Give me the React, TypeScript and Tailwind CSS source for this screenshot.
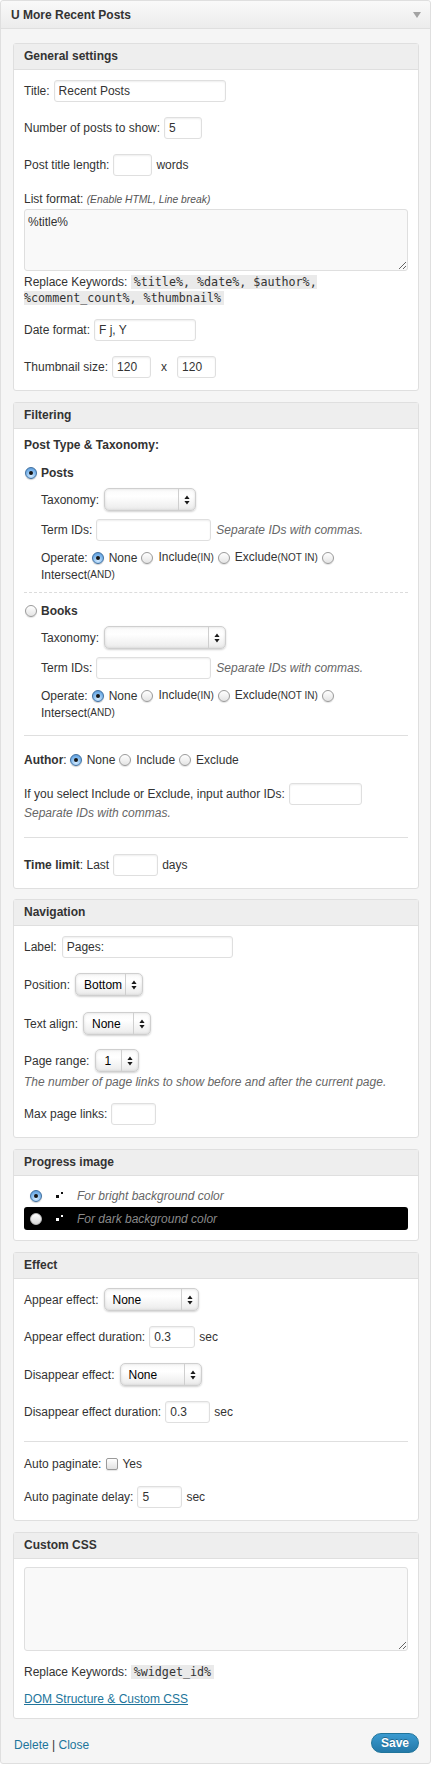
import React from "react";

const field =
  "h-[22px] shrink-0 rounded-[3px] border border-[#dfdfdf] bg-white px-[4px] text-[12px] text-[#333] outline-none shadow-[inset_0_1px_2px_rgba(0,0,0,0.07)]";

function Radio({ checked, className = "" }: { checked?: boolean; className?: string }) {
  if (checked) {
    return (
      <span
        className={
          "flex h-[12px] w-[12px] shrink-0 items-center justify-center rounded-full border border-[#3f6f9f] bg-[radial-gradient(circle_at_50%_75%,#d6ecff,#79b3ea_60%,#4f8fd0)] shadow-[0_1px_1px_rgba(0,0,0,0.2)] " +
          className
        }
      >
        <span className="h-[4px] w-[4px] rounded-full bg-[#161616]" />
      </span>
    );
  }
  return (
    <span
      className={
        "block h-[12px] w-[12px] shrink-0 rounded-full border border-[#9a9a9a] bg-[linear-gradient(#ffffff,#e4e4e4)] shadow-[0_1px_1px_rgba(0,0,0,0.12)] " +
        className
      }
    />
  );
}

function Select({ value, className }: { value: string; className: string }) {
  return (
    <span
      className={
        "flex h-[23px] shrink-0 items-stretch overflow-hidden rounded-[5px] border border-[#cfcfcf] bg-[linear-gradient(#fafafa,#ffffff_35%,#ebebeb)] shadow-[inset_0_0_3px_rgba(0,0,0,0.12),0_1px_2px_rgba(0,0,0,0.18)] " +
        className
      }
    >
      <span className="flex flex-1 items-center pl-[8px] text-[12px] text-black">{value}</span>
      <span className="flex w-[17px] items-center justify-center border-l border-[#cfcfcf]">
        <svg width="6" height="10" viewBox="0 0 6 10">
          <path d="M3 0.5L5.6 4H0.4z M0.4 6h5.2L3 9.5z" fill="#1a1a1a" />
        </svg>
      </span>
    </span>
  );
}

function Dots({ color }: { color: string }) {
  return (
    <svg width="8" height="8" viewBox="0 0 8 8" className="shrink-0">
      <rect x="5" y="0" width="2" height="2" fill={color} />
      <rect x="0" y="3" width="3" height="3" fill={color} />
    </svg>
  );
}

function Code({ children, className = "px-[3px]" }: { children: React.ReactNode; className?: string }) {
  return (
    <code
      className={
        "bg-[#eaeaea] font-['DejaVu_Sans_Mono',monospace] text-[11.7px] leading-[16px] text-[#333] " + className
      }
    >
      {children}
    </code>
  );
}

function Section({
  title,
  className,
  bodyClass,
  children,
}: {
  title: string;
  className: string;
  bodyClass: string;
  children: React.ReactNode;
}) {
  return (
    <div className={"rounded-[3px] border border-[#dfdfdf] bg-white " + className}>
      <div className="h-[26px] border-b border-[#dfdfdf] bg-[#eeeeee] px-[10px] text-[12px] font-bold leading-[25px] text-[#333]">
        {title}
      </div>
      <div className={"flex flex-col px-[10px] " + bodyClass}>{children}</div>
    </div>
  );
}

function Row({ className, children }: { className: string; children: React.ReactNode }) {
  return <div className={"flex items-center gap-[4px] " + className}>{children}</div>;
}

function Operate() {
  return (
    <>
      <div className="mt-[8px] flex h-[17px] items-center">
        <span>Operate:</span>
        <Radio checked className="ml-[4px]" />
        <span className="ml-[5px]">None</span>
        <Radio className="ml-[4px]" />
        <span className="ml-[5px]">
          Include<span className="text-[10px]">(IN)</span>
        </span>
        <Radio className="ml-[4px]" />
        <span className="ml-[5px]">
          Exclude<span className="text-[10px]">(NOT IN)</span>
        </span>
        <Radio className="ml-[4px]" />
      </div>
      <div className="flex h-[17px] items-center">
        Intersect<span className="text-[10px]">(AND)</span>
      </div>
    </>
  );
}

function Hint({ children }: { children: React.ReactNode }) {
  return <span className="ml-[1px] italic text-[#666]">{children}</span>;
}

export default function App() {
  return (
    <div className="min-h-[1766px] bg-white font-['Liberation_Sans',Arial,sans-serif] text-[12px] leading-[16px] text-[#333]">
      <div className="w-[431px] rounded-[3px] border border-[#dfdfdf] bg-[#f5f5f5]">
        {/* widget title bar */}
        <div className="flex h-[28px] items-center justify-between rounded-t-[3px] border-b border-[#dfdfdf] bg-[linear-gradient(#f9f9f9,#ececec)] pl-[10px] pr-[9px]">
          <span className="font-bold text-[#333]">U More Recent Posts</span>
          <svg width="8" height="6" viewBox="0 0 8 6">
            <path d="M0 0h8L4 6z" fill="#a3a3a3" />
          </svg>
        </div>

        <div className="flex flex-col pb-[10px] pl-[12px] pr-[11px] pt-[14px]">
          {/* General settings */}
          <Section title="General settings" className="" bodyClass="pb-[12px]">
            <Row className="mt-[10px] h-[22px]">
              <span>Title:</span>
              <input className={field + " w-[172px]"} defaultValue="Recent Posts" />
            </Row>
            <Row className="mt-[15px] h-[22px]">
              <span>Number of posts to show:</span>
              <input className={field + " w-[38px]"} defaultValue="5" />
            </Row>
            <Row className="mt-[15px] h-[22px]">
              <span>Post title length:</span>
              <input className={field + " w-[39px]"} defaultValue="" />
              <span>words</span>
            </Row>
            <div className="mt-[15px] h-[16px]">
              List format: <span className="text-[10.3px] italic text-[#555]">(Enable HTML, Line break)</span>
            </div>
            <textarea
              className="mt-[2px] h-[62px] w-full rounded-[3px] border border-[#dfdfdf] bg-[#f9f9f9] px-[3px] pt-[4px] text-[12px] leading-[16px] text-[#333] outline-none"
              defaultValue="%title%"
            />
            <div className="mt-[3px] flex flex-col">
              <div className="h-[16px]">
                Replace Keywords: <Code className="pl-[3px]">%title%, %date%, $author%,</Code>
              </div>
              <div className="h-[16px]">
                <Code className="pr-[3px]">%comment_count%, %thumbnail%</Code>
              </div>
            </div>
            <Row className="mt-[13px] h-[22px]">
              <span>Date format:</span>
              <input className={field + " w-[102px]"} defaultValue="F j, Y" />
            </Row>
            <Row className="mt-[15px] h-[22px]">
              <span>Thumbnail size:</span>
              <input className={field + " w-[39px]"} defaultValue="120" />
              <span className="px-[6px]">x</span>
              <input className={field + " w-[39px]"} defaultValue="120" />
            </Row>
          </Section>

          {/* Filtering */}
          <Section title="Filtering" className="mt-[11px]" bodyClass="pb-[12px]">
            <div className="mt-[8px] h-[16px] font-bold">Post Type &amp; Taxonomy:</div>

            <div className="mt-[12px] flex h-[16px] items-center">
              <Radio checked className="ml-[1px]" />
              <span className="ml-[4px] font-bold">Posts</span>
            </div>
            <div className="flex flex-col pl-[17px]">
              <Row className="mt-[7px] h-[23px]">
                <span>Taxonomy:</span>
                <Select value="" className="ml-[1px] w-[92px]" />
              </Row>
              <Row className="mt-[8px] h-[22px]">
                <span>Term IDs:</span>
                <input className={field + " w-[115px]"} />
                <Hint>Separate IDs with commas.</Hint>
              </Row>
              <Operate />
            </div>

            <div className="mt-[9px] border-t border-dashed border-[#dcdcdc]" />

            <div className="mt-[10px] flex h-[16px] items-center">
              <Radio className="ml-[1px]" />
              <span className="ml-[4px] font-bold">Books</span>
            </div>
            <div className="flex flex-col pl-[17px]">
              <Row className="mt-[7px] h-[23px]">
                <span>Taxonomy:</span>
                <Select value="" className="ml-[1px] w-[122px]" />
              </Row>
              <Row className="mt-[8px] h-[22px]">
                <span>Term IDs:</span>
                <input className={field + " w-[115px]"} />
                <Hint>Separate IDs with commas.</Hint>
              </Row>
              <Operate />
            </div>

            <div className="mt-[14px] border-t border-[#dfdfdf]" />

            <div className="mt-[16px] flex h-[16px] items-center">
              <span>
                <b>Author</b>:
              </span>
              <Radio checked className="ml-[3px]" />
              <span className="ml-[5px]">None</span>
              <Radio className="ml-[4px]" />
              <span className="ml-[5px]">Include</span>
              <Radio className="ml-[4px]" />
              <span className="ml-[5px]">Exclude</span>
            </div>
            <Row className="mt-[15px] h-[22px]">
              <span>If you select Include or Exclude, input author IDs:</span>
              <input className={field + " w-[73px]"} />
            </Row>
            <div className="h-[16px] italic text-[#666]">Separate IDs with commas.</div>

            <div className="mt-[16px] border-t border-[#dfdfdf]" />

            <Row className="mt-[16px] h-[22px]">
              <span>
                <b>Time limit</b>: Last
              </span>
              <input className={field + " w-[45px]"} />
              <span>days</span>
            </Row>
          </Section>

          {/* Navigation */}
          <Section title="Navigation" className="mt-[10px]" bodyClass="pb-[12px]">
            <Row className="mt-[10px] h-[22px]">
              <span>Label:</span>
              <input className={field + " ml-[1px] w-[171px]"} defaultValue="Pages:" />
            </Row>
            <Row className="mt-[15px] h-[23px]">
              <span>Position:</span>
              <Select value="Bottom" className="ml-[1px] w-[68px]" />
            </Row>
            <Row className="mt-[16px] h-[23px]">
              <span>Text align:</span>
              <Select value="None" className="ml-[1px] w-[68px]" />
            </Row>
            <Row className="mt-[14px] h-[23px]">
              <span>Page range:</span>
              <Select value="1" className="ml-[2px] w-[44px]" />
            </Row>
            <div className="mt-[2px] h-[16px] italic text-[#666]">
              The number of page links to show before and after the current page.
            </div>
            <Row className="mt-[13px] h-[22px]">
              <span>Max page links:</span>
              <input className={field + " w-[45px]"} />
            </Row>
          </Section>

          {/* Progress image */}
          <Section title="Progress image" className="mt-[11px]" bodyClass="pb-[10px]">
            <div className="mt-[8px] flex h-[23px] items-center pl-[6px]">
              <Radio checked />
              <span className="ml-[14px]">
                <Dots color="#111" />
              </span>
              <span className="ml-[13px] italic text-[#666]">For bright background color</span>
            </div>
            <div className="flex h-[23px] items-center rounded-[3px] bg-black pl-[6px]">
              <span className="block h-[12px] w-[12px] shrink-0 rounded-full border border-[#bbbbbb] bg-[linear-gradient(#ffffff,#d8d8d8)]" />
              <span className="ml-[14px]">
                <Dots color="#ffffff" />
              </span>
              <span className="ml-[13px] italic text-[#8a8a8a]">For dark background color</span>
            </div>
          </Section>

          {/* Effect */}
          <Section title="Effect" className="mt-[11px]" bodyClass="pb-[12px]">
            <Row className="mt-[9px] h-[23px]">
              <span>Appear effect:</span>
              <Select value="None" className="ml-[1px] w-[95px]" />
            </Row>
            <Row className="mt-[15px] h-[22px]">
              <span>Appear effect duration:</span>
              <input className={field + " w-[46px]"} defaultValue="0.3" />
              <span>sec</span>
            </Row>
            <Row className="mt-[15px] h-[23px]">
              <span>Disappear effect:</span>
              <Select value="None" className="ml-[1px] w-[82px]" />
            </Row>
            <Row className="mt-[15px] h-[22px]">
              <span>Disappear effect duration:</span>
              <input className={field + " w-[45px]"} defaultValue="0.3" />
              <span>sec</span>
            </Row>

            <div className="mt-[18px] border-t border-[#dfdfdf]" />

            <div className="mt-[14px] flex h-[16px] items-center">
              <span>Auto paginate:</span>
              <span className="ml-[5px] block h-[12px] w-[12px] shrink-0 rounded-[2px] border border-[#9a9a9a] bg-[linear-gradient(#ffffff,#e2e2e2)] shadow-[0_1px_1px_rgba(0,0,0,0.1)]" />
              <span className="ml-[4px]">Yes</span>
            </div>
            <Row className="mt-[14px] h-[22px]">
              <span>Auto paginate delay:</span>
              <input className={field + " w-[45px]"} defaultValue="5" />
              <span>sec</span>
            </Row>
          </Section>

          {/* Custom CSS */}
          <Section title="Custom CSS" className="mt-[11px]" bodyClass="pb-[11px]">
            <textarea className="mt-[8px] h-[84px] w-full rounded-[3px] border border-[#dfdfdf] bg-[#f9f9f9] px-[3px] pt-[4px] text-[12px] leading-[16px] text-[#333] outline-none" />
            <div className="mt-[13px] h-[16px]">
              Replace Keywords: <Code>%widget_id%</Code>
            </div>
            <div className="mt-[11px] h-[16px]">
              <a href="#" className="text-[#21759b] underline">
                DOM Structure &amp; Custom CSS
              </a>
            </div>
          </Section>

          {/* widget actions */}
          <div className="mt-[14px] flex items-start justify-between">
            <span className="mt-[4px] h-[16px] pl-[1px]">
              <a href="#" className="text-[#21759b]">
                Delete
              </a>{" "}
              |{" "}
              <a href="#" className="text-[#21759b]">
                Close
              </a>
            </span>
            <span className="flex h-[20px] w-[48px] items-center justify-center rounded-full border border-[#21759b] bg-[linear-gradient(#3a9ad0,#2479a8)] text-[12px] font-bold text-white [text-shadow:0_-1px_0_rgba(0,0,0,0.3)]">
              Save
            </span>
          </div>
        </div>
      </div>
    </div>
  );
}
